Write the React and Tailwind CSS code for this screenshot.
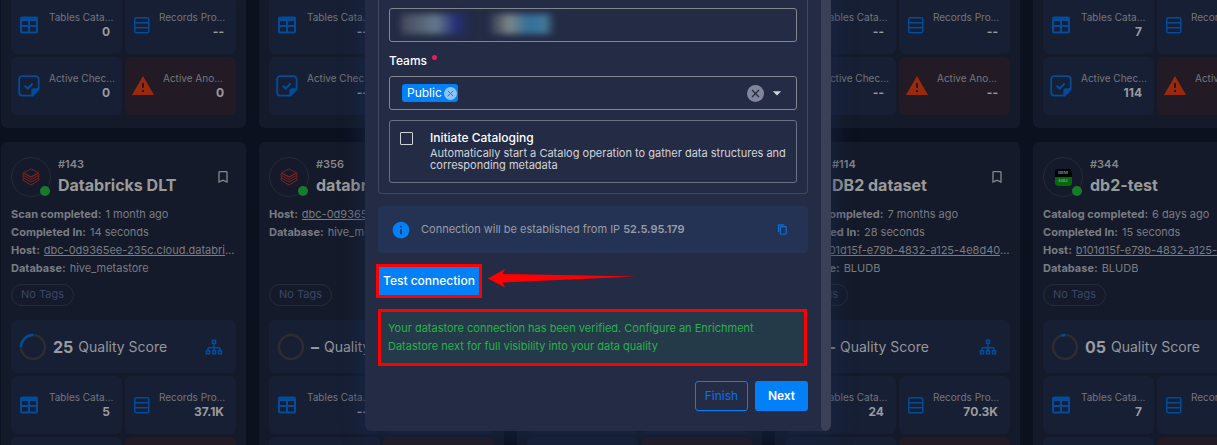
import { MdBookmarkBorder, MdContentCopy, MdInfo, MdArrowDropDown } from "react-icons/md";

const CARDS = [
  {
    id: "#143", name: "Databricks DLT", logo: "databricks", score: "25", percent: 25,
    meta: [["Scan completed:", "1 month ago"], ["Completed In:", "14 seconds"], ["Host:", "dbc-0d9365ee-235c.cloud.databricks.com", true], ["Database:", "hive_metastore"]],
    previous: ["0", "--", "0", "0"], stats: ["5", "37.1K", "", ""],
  },
  {
    id: "#356", name: "databricks", logo: "databricks", score: "–", percent: 0,
    meta: [["Host:", "dbc-0d9365ee-235c.cloud.databricks.com", true], ["Database:", "hive_metastore"]],
    previous: ["--", "--", "--", "--"], stats: ["--", "--", "", ""],
  },
  { id: "", name: "", logo: "db2", score: "–", percent: 0, meta: [], previous: ["--", "--", "--", "--"], stats: ["--", "--", "", ""] },
  {
    id: "#114", name: "DB2 dataset", logo: "db2", score: "–", percent: 0,
    meta: [["Profile completed:", "7 months ago"], ["Completed In:", "28 seconds"], ["Host:", "b101d15f-e79b-4832-a125-4e8d407c93dd", true], ["Database:", "BLUDB"]],
    previous: ["--", "--", "--", "--"], stats: ["24", "70.3K", "", ""],
  },
  {
    id: "#344", name: "db2-test", logo: "db2", score: "05", percent: 5,
    meta: [["Catalog completed:", "6 days ago"], ["Completed In:", "15 seconds"], ["Host:", "b101d15f-e79b-4832-a125-4e8d407c93dd", true], ["Database:", "BLUDB"]],
    previous: ["7", "--", "114", "--"], stats: ["7", "--", "", ""],
  },
];

function TableIcon() {
  return (
    <svg viewBox="0 0 24 24" className="size-6 shrink-0 fill-[#034c9a]" aria-hidden="true">
      <path d="M5 3.6h14a2 2 0 0 1 2 2v13a2 2 0 0 1-2 2H5a2 2 0 0 1-2-2v-13a2 2 0 0 1 2-2M5 8v4h6V8H5m8 0v4h6V8h-6m-8 6v4.4h6V14H5m8 0v4.4h6V14h-6Z" />
    </svg>
  );
}

function RowsIcon() {
  return (
    <svg viewBox="0 0 18 18" className="size-[18px] shrink-0 fill-none stroke-[#034c9a] stroke-[1.5]" aria-hidden="true">
      <rect x="1.75" y="1.75" width="14" height="15" rx="1.6" />
      <path d="M1.75 6.75h14M1.75 11.75h14" />
    </svg>
  );
}

function CheckNoteIcon() {
  return (
    <svg viewBox="0 0 24 24" className="size-6 shrink-0 fill-none stroke-[#034c9a] stroke-[1.8]" aria-hidden="true">
      <path d="M15.2 21.6H5a2.8 2.8 0 0 1-2.8-2.8V5A2.8 2.8 0 0 1 5 2.2h13.8A2.8 2.8 0 0 1 21.600 5v10.200l-6.400 6.400Z" strokeLinejoin="round" />
      <path d="M15.200 21.600v-4.400a2 2 0 0 1 2-2h4.400Z" className="fill-[#034c9a]" strokeLinejoin="round" />
      <path d="m7.800 11.800 2.900 2.700 5-5" strokeWidth="2" />
    </svg>
  );
}

function AlertIcon() {
  return (
    <svg viewBox="0 0 24 24" className="size-6 shrink-0 fill-[#9b2a0c]" aria-hidden="true">
      <path d="M13 14h-2V9h2m0 9h-2v-2h2M1 21h22L12 2 1 21Z" />
    </svg>
  );
}

function SitemapIcon() {
  return (
    <svg viewBox="0 0 24 24" className="size-[18px] fill-[#034c9a]" aria-hidden="true">
      <path d="M21 16v-2a2 2 0 0 0-2-2h-6V8h2V2H9v6h2v4H5a2 2 0 0 0-2 2v2H1v6h6v-6H5v-2h6v2H9v6h6v-6h-2v-2h6v2h-2v6h6v-6h-2M11 4h2v2h-2V4M5 20H3v-2h2v2m8 0h-2v-2h2v2m8 0h-2v-2h2v2Z" />
    </svg>
  );
}

function CloseIcon({ className }) {
  return (
    <svg viewBox="0 0 16 16" className={className} aria-hidden="true">
      <circle cx="8" cy="8" r="8" />
      <path d="m4.700 4.700 6.600 6.600m0-6.600-6.600 6.600" className="fill-none stroke-current stroke-[1.2]" />
    </svg>
  );
}

function StoreLogo({ kind }) {
  return (
    <div className="relative grid size-10 shrink-0 place-items-center rounded-full border border-[#252a38]">
      {kind === "databricks" ? (
        <svg viewBox="0 0 18 18" className="size-[18px] fill-none stroke-[#7c211f] stroke-[1]" aria-hidden="true">
          <path d="M1.200 5 9 .8 16.800 5 9 9.300 1.200 5Zm0 0v2.300L9 11.600l7.800-4.300V5.600M1.200 7.600v2.200L9 14.100l7.800-4.300V7.600M1.200 10.200v2.200L9 16.900l7.800-4.500v-2.200M3 5.600l6 3.200 6-3.200" />
        </svg>
      ) : (
        <div className="flex size-[17px] flex-col overflow-hidden rounded-[3px] bg-black text-center font-['Liberation_Serif',serif] text-[5px] leading-[8px] font-bold text-[#8f8f8f]">
          <span>IBM</span>
          <span className="h-[9px] bg-[#046a08]">DB2</span>
        </div>
      )}
      <span className="absolute right-0 bottom-0 size-[10px] rounded-full bg-[#187a2b]" />
    </div>
  );
}

function Stat({ icon, label, value, tone = "normal", className }) {
  const background = tone === "alert" ? "bg-[#221b26]" : "bg-[#171f34]";
  return (
    <div className={`flex h-[58px] items-center gap-2 rounded-md pr-3 ${background} ${className}`}>
      {icon}
      <div className="min-w-0 flex-1">
        <p className="text-[10px] leading-[14px] whitespace-nowrap text-[#74777f]">{label}</p>
        <p className="text-right text-xs leading-4 font-bold text-[#9a9b9f]">{value}</p>
      </div>
    </div>
  );
}

function Stats({ values }) {
  return (
    <div className="grid grid-cols-2 gap-[3px]">
      <Stat icon={<TableIcon />} label="Tables Cata…" value={values[0]} className="pl-[6px]" />
      <Stat icon={<RowsIcon />} label="Records Pro…" value={values[1]} className="pl-2" />
      <Stat icon={<CheckNoteIcon />} label="Active Chec…" value={values[2]} className="pl-[6px]" />
      <Stat icon={<AlertIcon />} label="Active Ano…" value={values[3]} tone="alert" className="pl-[6px]" />
    </div>
  );
}

function ScoreRing({ percent }) {
  return (
    <svg viewBox="0 0 28 28" className="size-7 -rotate-90 fill-none stroke-[2.5]" aria-hidden="true">
      <circle cx="14" cy="14" r="12" className="stroke-[#2d2c2f]" />
      {percent > 0 && <circle cx="14" cy="14" r="12" pathLength="100" strokeDasharray={`${percent} 100`} className="origin-center -scale-y-100 stroke-[#034c9a]" />}
    </svg>
  );
}

function StoreCard({ card }) {
  return (
    <article className="rounded-md bg-[#141a29] px-[10px] pt-[15px] pb-[13px]">
      <header className="flex items-center gap-[7px]">
        <StoreLogo kind={card.logo} />
        <div className="min-w-0 flex-1">
          <p className="mb-[2px] text-[11px] leading-[14px] font-semibold text-[#858689]">{card.id}</p>
          <h2 className="truncate text-base leading-6 font-bold text-[#9a9a9a]">{card.name}</h2>
        </div>
        <button type="button" aria-label="Bookmark" className="mr-[5px] text-[#85878b]">
          <MdBookmarkBorder className="size-4" />
        </button>
      </header>
      <dl className="mt-2 h-[72px] text-[11px] leading-[18px] text-[#7a7c82]">
        {card.meta.map(([label, value, link]) => (
          <div key={label} className="flex gap-1 whitespace-nowrap">
            <dt className="font-bold">{label}</dt>
            <dd className="min-w-0 truncate">{link ? <a href="#host" className="underline">{value}</a> : value}</dd>
          </div>
        ))}
      </dl>
      <span className="mt-[7px] inline-block h-[22px] rounded-full border border-[#252b3b] px-[9px] text-[11px] leading-[19px] text-[#3b4668]">No Tags</span>
      <div className="mt-[14px] mb-[3px] flex h-[53px] items-center rounded-md bg-[#171f34] px-2">
        <ScoreRing percent={card.percent} />
        <span className="ml-[6px] text-base font-bold text-[#9a9b9f]">{card.score}</span>
        <span className="ml-[5px] flex-1 text-sm text-[#96979b]">Quality Score</span>
        <button type="button" aria-label="View lineage" className="mr-[5px]"><SitemapIcon /></button>
      </div>
      <Stats values={card.stats} />
    </article>
  );
}

function Dialog() {
  return (
    <section role="dialog" aria-label="Add datastore" className="flex w-[466px] overflow-hidden rounded-b-md bg-[#232b45] shadow-[0_0_20px_4px_rgba(24,42,80,0.6)]">
      <form className="min-w-0 flex-1 px-[13px] pb-5" onSubmit={(e) => e.preventDefault()}>
        <div className="rounded-b-sm border border-t-0 border-[#404860] px-[10px] pt-2 pb-[10px]">
          <div className="relative">
            <input aria-label="Connection secret" className="block h-[34px] w-full rounded-[3px] border border-[#85868c] bg-transparent px-3 text-xs text-white outline-none" />
            <div className="pointer-events-none absolute top-[6px] left-3 h-5 w-[70px] bg-[linear-gradient(90deg,#454859,#64798c_50%,#25307a_78%,transparent)] blur-[3px]" />
            <div className="pointer-events-none absolute top-[6px] left-[100px] h-5 w-[66px] bg-[linear-gradient(90deg,#2b334c,#7e8688_30%,#326f9b_60%,#457998_85%,transparent)] blur-[3px]" />
          </div>
          <label htmlFor="teams" className="mt-[10px] flex h-[18px] items-center gap-[5px] text-xs font-medium text-white">
            Teams
            <span className="mb-[7px] size-[5px] rounded-full bg-[#ec1c5c]" />
          </label>
          <div className="mt-[6px] flex h-[34px] items-center rounded-[3px] border border-[#85868c] pr-[9px] pl-3">
            <span className="flex h-[18px] items-center gap-[2px] rounded-[3px] bg-[#0280f8] pr-[1px] pl-[5px] text-xs text-white">
              Public
              <button type="button" aria-label="Remove Public"><CloseIcon className="size-[13px] fill-[#8cc4fb] text-[#0280f8]" /></button>
            </span>
            <input id="teams" className="h-full min-w-0 flex-1 bg-transparent text-xs text-white outline-none" />
            <button type="button" aria-label="Clear teams"><CloseIcon className="size-[17px] fill-[#81869a] text-[#232b45]" /></button>
            <button type="button" aria-label="Open teams" className="ml-[3px] text-[#d0d3da]"><MdArrowDropDown className="size-5" /></button>
          </div>
          <div className="mt-[10px] flex h-[63px] gap-[17px] rounded-[3px] border border-[#6b7082] pt-[9px] pl-[10px]">
            <input id="catalog" type="checkbox" className="mt-[2px] size-[13px] shrink-0 appearance-none rounded-[1px] border border-[#d0d3da] checked:bg-[#0280f8]" />
            <label htmlFor="catalog" className="text-[11px] leading-3 text-[#d3d5da]">
              <span className="block pb-[1px] text-xs leading-4 font-medium text-white">Initiate Cataloging</span>
              Automatically start a Catalog operation to gather data structures and corresponding metadata
            </label>
          </div>
        </div>

        <div className="mt-3 flex h-[47px] items-center rounded bg-[#243354] pr-5 pl-[13px] text-[11px] text-[#9a9ca3]">
          <MdInfo className="size-5 text-[#0280f8]" />
          <p className="ml-[10px] flex-1">Connection will be established from IP <b className="font-semibold">52.5.95.179</b></p>
          <button type="button" aria-label="Copy IP address" className="text-[#0280f8]"><MdContentCopy className="size-[11px]" /></button>
        </div>

        <div className="-ml-[2px] mt-[11px] flex items-center gap-[6px]">
          <button type="button" className="h-[34px] border-3 border-[#ff0000] bg-[#0280f8] px-1 text-xs font-medium whitespace-nowrap text-white">Test connection</button>
          <svg viewBox="0 0 148 20" className="mb-[6px] h-5 w-[148px] fill-[#ff0000]" aria-hidden="true">
            <path d="M0 10.500 17 1l-2.500 5L148 8.500 14.500 14.500 17 19.500Z" />
          </svg>
        </div>

        <p role="status" className="mt-[11px] mr-[1px] border-3 border-[#ff0000] bg-[#253a48] px-[7px] pt-[7px] pb-2 text-[11px] leading-[18px] text-[#27b24b]">
          Your datastore connection has been verified. Configure an Enrichment<br />
          Datastore next for full visibility into your data quality
        </p>

        <div className="mt-[15px] flex justify-end gap-[7px] text-xs">
          <button type="button" className="h-[30px] w-[53px] rounded-[3px] border border-[#0280f8] text-[#0f6ff0]">Finish</button>
          <button type="submit" className="h-[30px] w-[53px] rounded-[3px] bg-[#0280f8] font-semibold text-white">Next</button>
        </div>
      </form>
      <div className="w-[10px] rounded-b-full bg-[#3b4056]" />
    </section>
  );
}

export default function App() {
  return (
    <div className="relative h-screen overflow-hidden bg-[#0c1120] font-['Inter','Liberation_Sans',sans-serif]">
      <main className="flex flex-col gap-[14px] pl-px">
        <div className="grid auto-cols-[245px] grid-flow-col gap-[13px]">
          {CARDS.map((card, i) => (
            <div key={i} className="flex h-32 flex-col justify-end overflow-hidden rounded-b-md bg-[#141a29] px-[10px] pb-[13px]">
              <Stats values={card.previous} />
            </div>
          ))}
        </div>
        <div className="grid auto-cols-[245px] grid-flow-col gap-[13px]">
          {CARDS.map((card, i) => <StoreCard key={i} card={card} />)}
        </div>
      </main>
      <div className="absolute inset-x-0 top-0 flex justify-center pr-[21px]">
        <Dialog />
      </div>
    </div>
  );
}
